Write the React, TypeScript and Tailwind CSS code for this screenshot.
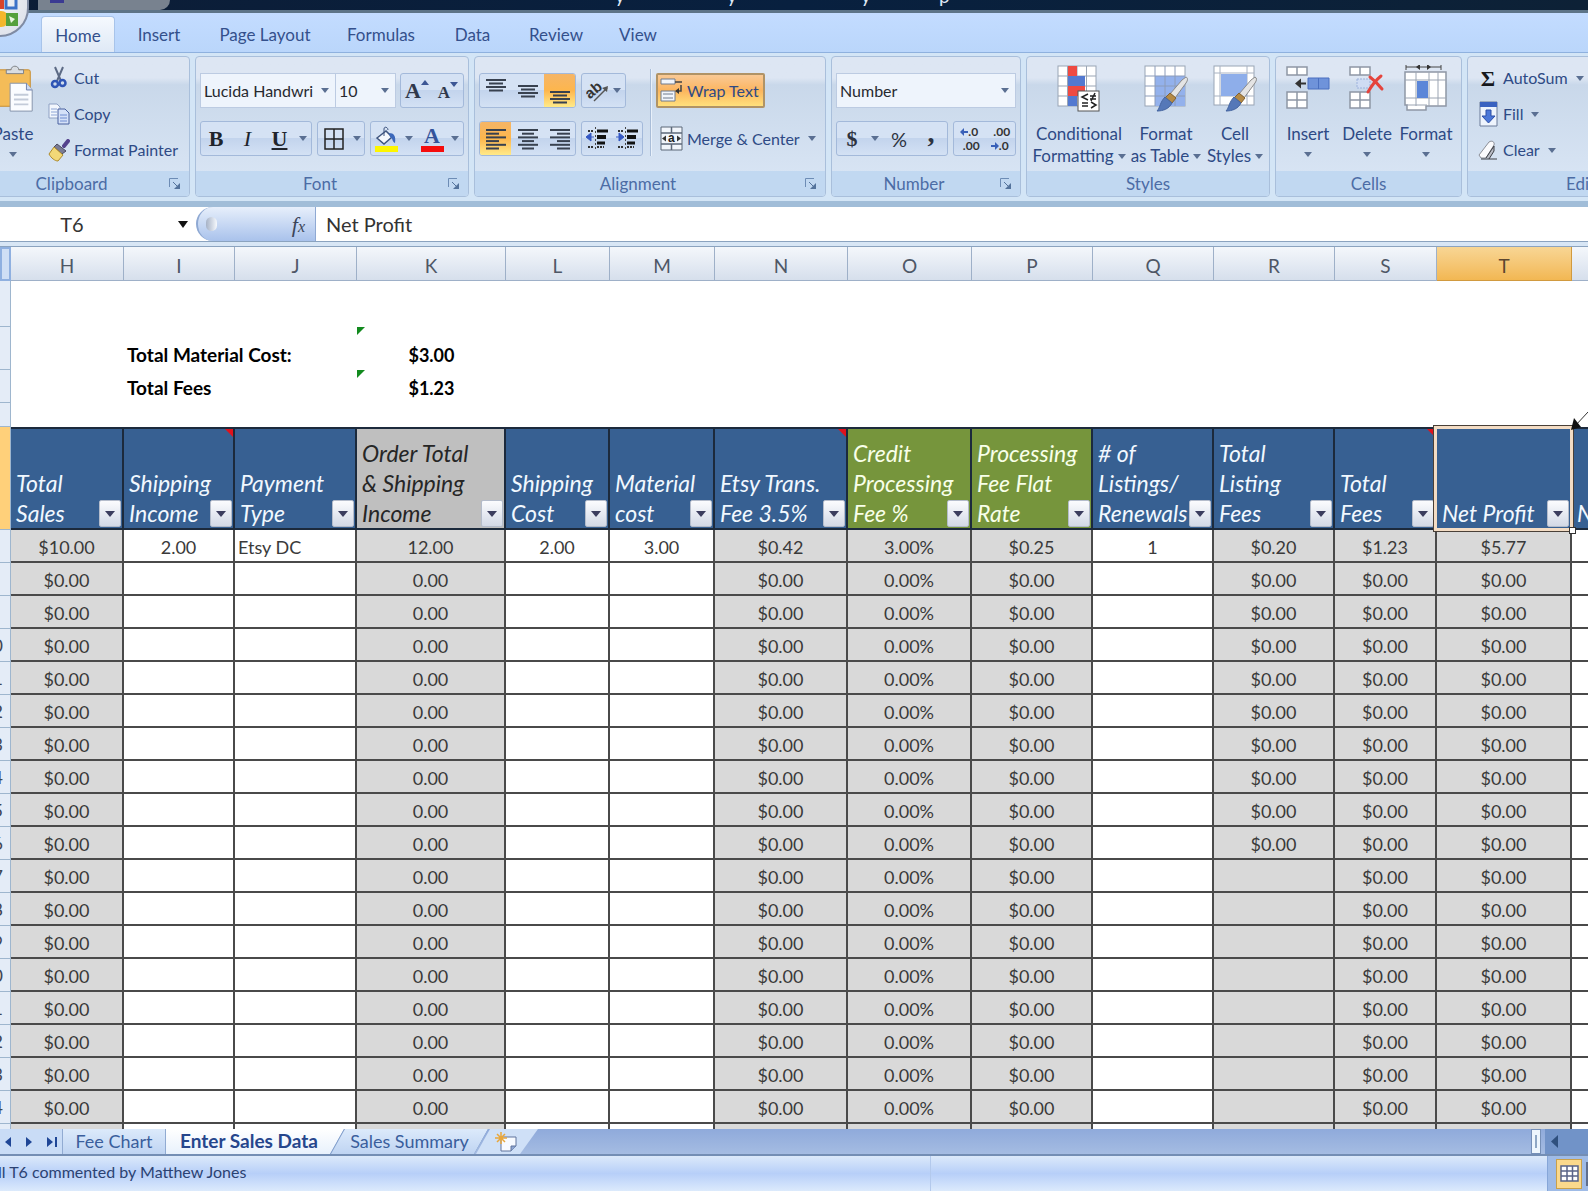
import type { ReactNode } from "react";

type Tone = "blue" | "gray" | "green";

interface Column {
  letter: string;
  width: string;
  header: string[];
  tone: Tone;
  shaded?: boolean;
  comment?: boolean;
  first: string;
  rest: string;
  restRows?: number;
}

const COLUMNS: Column[] = [
  { letter: "H", width: "w-[113px]", header: ["Total", "Sales"], tone: "blue", shaded: true, first: "$10.00", rest: "$0.00" },
  { letter: "I", width: "w-[111px]", header: ["Shipping", "Income"], tone: "blue", comment: true, first: "2.00", rest: "" },
  { letter: "J", width: "w-[122px]", header: ["Payment", "Type"], tone: "blue", first: "Etsy DC", rest: "" },
  { letter: "K", width: "w-[149px]", header: ["Order Total", "& Shipping", "Income"], tone: "gray", shaded: true, first: "12.00", rest: "0.00" },
  { letter: "L", width: "w-[104px]", header: ["Shipping", "Cost"], tone: "blue", first: "2.00", rest: "" },
  { letter: "M", width: "w-[105px]", header: ["Material", "cost"], tone: "blue", first: "3.00", rest: "" },
  { letter: "N", width: "w-[133px]", header: ["Etsy Trans.", "Fee 3.5%"], tone: "blue", shaded: true, comment: true, first: "$0.42", rest: "$0.00" },
  { letter: "O", width: "w-[124px]", header: ["Credit", "Processing", "Fee %"], tone: "green", shaded: true, first: "3.00%", rest: "0.00%" },
  { letter: "P", width: "w-[121px]", header: ["Processing", "Fee Flat", "Rate"], tone: "green", shaded: true, first: "$0.25", rest: "$0.00" },
  { letter: "Q", width: "w-[121px]", header: ["# of", "Listings/", "Renewals"], tone: "blue", first: "1", rest: "" },
  { letter: "R", width: "w-[121px]", header: ["Total", "Listing", "Fees"], tone: "blue", shaded: true, first: "$0.20", rest: "$0.00", restRows: 9 },
  { letter: "S", width: "w-[102px]", header: ["Total", "Fees"], tone: "blue", shaded: true, comment: true, first: "$1.23", rest: "$0.00" },
  { letter: "T", width: "w-[135px]", header: ["Net Profit"], tone: "blue", shaded: true, first: "$5.77", rest: "$0.00" },
];

const TONES: Record<Tone, string> = {
  blue: "bg-[#376092] text-[#f1f8ff]",
  gray: "bg-[#bfbfbf] text-[#262626]",
  green: "bg-[#76953c] text-[#f8ffe9]",
};

const ROWS = Array.from({ length: 19 }, (_, i) => i + 7);

const TABS = [
  { label: "Insert", width: "w-[88px]" },
  { label: "Page Layout", width: "w-[124px]" },
  { label: "Formulas", width: "w-[108px]" },
  { label: "Data", width: "w-[75px]" },
  { label: "Review", width: "w-[92px]" },
  { label: "View", width: "w-[72px]" },
];

function Caret({ className = "text-[#5a6f92]" }: { className?: string }) {
  return (
    <svg width="8" height="5" viewBox="0 0 8 5" className={`shrink-0 ${className}`} aria-hidden="true">
      <path d="M0 0h8L4 5z" fill="currentColor" />
    </svg>
  );
}

function Group({ label, width, launcher, children }: { label: string; width: string; launcher?: boolean; children: ReactNode }) {
  return (
    <section
      className={`flex h-[141px] shrink-0 flex-col overflow-hidden rounded-[4px] border border-[#a9bfdb] bg-linear-to-b from-[#dde6f3] from-15% via-[#c9d8ea] via-20% to-[#dbe7f6] ${width}`}
    >
      <div className="flex-1">{children}</div>
      <div className="flex h-[25px] items-center bg-[#c1d8f1] text-[17px] text-[#4c6ca5]">
        <span className="flex-1 text-center">{label}</span>
        {launcher && (
          <button aria-label={`${label} options`} className="flex w-[24px] justify-center pr-1">
            <svg width="12" height="12" viewBox="0 0 12 12" fill="none" stroke="#6d8cb5">
              <path d="M.5 9V.5H9" />
              <path d="M4 4l5 5" stroke="#54739c" />
              <path d="M11 5v6H5z" fill="#54739c" stroke="none" />
            </svg>
          </button>
        )}
      </div>
    </section>
  );
}

function Box({ className = "", children }: { className?: string; children: ReactNode }) {
  return (
    <div className={`flex h-[35px] shrink-0 overflow-hidden rounded-[3px] border border-[#a3b9da] bg-linear-to-b from-[#d5e2f4] from-50% via-[#c3d4ed] via-50% to-[#d3e1f4] ${className}`}>
      {children}
    </div>
  );
}

function IconButton({ label, className = "", children }: { label: string; className?: string; children: ReactNode }) {
  return (
    <button aria-label={label} className={`flex items-center justify-center ${className}`}>
      {children}
    </button>
  );
}

function Dropdown({ label, value, className = "" }: { label: string; value: string; className?: string }) {
  return (
    <label className={`relative flex h-[35px] border-[#bccbe2] bg-[#eef4fc] ${className}`}>
      <span className="sr-only">{label}</span>
      <select className="w-full appearance-none pl-[3px] text-[16px] text-[#26292f]">
        <option>{value}</option>
      </select>
      <span className="pointer-events-none absolute top-[14px] right-[6px] flex">
        <Caret />
      </span>
    </label>
  );
}

const ALIGN_LINES = {
  left: [[0, 20], [0, 13], [0, 20], [0, 13], [0, 20], [0, 13]],
  center: [[0, 20], [4, 12], [0, 20], [4, 12], [0, 20], [4, 12]],
  right: [[0, 20], [7, 13], [0, 20], [7, 13], [0, 20], [7, 13]],
  short: [[0, 20], [3, 14], [0, 20], [3, 14]],
};

function LinesIcon({ kind }: { kind: keyof typeof ALIGN_LINES }) {
  const lines = ALIGN_LINES[kind];
  const step = kind === "short" ? 3.5 : 3.7;
  return (
    <svg width="20" height={kind === "short" ? 14 : 22} aria-hidden="true">
      {lines.map(([x, w], i) => (
        <rect key={i} x={x} y={i * step + 1} width={w} height="2" fill="#38414f" />
      ))}
    </svg>
  );
}

function IndentIcon({ right }: { right?: boolean }) {
  return (
    <svg width="24" height="26" viewBox="0 0 24 26" aria-hidden="true">
      <path d="M10.5 1v24" stroke="#444" strokeDasharray="2 2" />
      <path d="M3 5h6M3 21h6M12 21h7" stroke="#333" strokeWidth="2" strokeDasharray="2 1" />
      <path d="M12 5h11M12 17h8" stroke="#111" strokeWidth="3" />
      <path d="M12 11h9" stroke="#111" strokeWidth="4" />
      <path d={right ? "M1 11h5M4 7l5 4-5 4z" : "M9 11H4M6 7l-5 4 5 4z"} fill="#3458c4" stroke="#3458c4" />
    </svg>
  );
}

function Brush() {
  return (
    <g>
      <path d="M42 12c2 1 2 3 0 6L31 33l-5-4L38 15z" fill="#e4e4e4" stroke="#8a8a8a" />
      <path d="M26 28l6 5-4 5-7-5z" fill="#b58a45" stroke="#806030" />
      <path d="M21 32l7 6c-3 6-9 8-15 8 3-3 3-9 8-14z" fill="#5578b8" stroke="#4565a0" />
    </g>
  );
}

function ConditionalIcon() {
  return (
    <svg width="44" height="48" viewBox="0 0 44 48" aria-hidden="true">
      <rect x="1" y="1" width="38" height="40" fill="#fff" stroke="#9aa5b5" />
      <path d="M1 11h38M1 21h38M1 31h38M10.5 1v40M20 1v40M29.5 1v40" stroke="#9aa5b5" />
      <path d="M11 1h9v10h-9zM11 21h17v10H11z" fill="#ee4a42" />
      <path d="M11 11h17v10H11zM11 31h9v10h-9z" fill="#5379d0" />
      <rect x="21" y="26" width="21" height="20" fill="#fff" stroke="#555" />
      <path d="M31 29l-6 3 6 3M25 38h6M25 41h6M33 31h6M33 34h6M38 28l-4 8M34 37l5 3-5 3" fill="none" stroke="#222" strokeWidth="1.5" />
    </svg>
  );
}

function FormatTableIcon() {
  return (
    <svg width="44" height="48" viewBox="0 0 44 48" aria-hidden="true">
      <rect x="1" y="1" width="40" height="40" fill="#fff" stroke="#9aa5b5" />
      <path d="M11 11h30v30H11z" fill="#93b1ec" />
      <path d="M1 11h40M1 21h40M1 31h40M11 1v40M21 1v40M31 1v40" stroke="#8c9cba" />
      <Brush />
    </svg>
  );
}

function CellStylesIcon() {
  return (
    <svg width="44" height="48" viewBox="0 0 44 48" aria-hidden="true">
      <rect x="1" y="1" width="40" height="39" fill="#fff" stroke="#9aa5b5" />
      <path d="M1 8h40M1 31h40M7 1v39M34 1v39" stroke="#a8b2c2" />
      <path d="M8 9h26v22H8z" fill="#8eaeea" />
      <Brush />
    </svg>
  );
}

function InsertCellsIcon() {
  return (
    <svg width="44" height="48" viewBox="0 0 44 48" aria-hidden="true">
      <path d="M1 2h20v8H1zM11 2v8M1 27h20v16H1zM11 27v16M1 35h20" fill="#fff" stroke="#8e97a5" strokeWidth="1.5" />
      <path d="M22 13h21v11H22z" fill="#6f93da" stroke="#4a6fbf" />
      <path d="M32.5 13v11" stroke="#4a6fbf" />
      <path d="M20 18.5h-6" stroke="#333" strokeWidth="2" />
      <path d="M9 18.5l6-5v10z" fill="#333" />
    </svg>
  );
}

function DeleteCellsIcon() {
  return (
    <svg width="44" height="48" viewBox="0 0 44 48" aria-hidden="true">
      <path d="M5 2h20v8H5zM15 2v8M5 27h20v16H5zM15 27v16M5 35h20" fill="#fff" stroke="#8e97a5" strokeWidth="1.5" />
      <path d="M12 14h13v9H12z" fill="#cfdcf3" stroke="#9db2dc" strokeDasharray="2 1" />
      <path d="M25 12c4 3 8 7 12 12M36 11c-5 4-9 9-13 16" fill="none" stroke="#e5443c" strokeWidth="3" strokeLinecap="round" />
    </svg>
  );
}

function FormatCellsIcon() {
  return (
    <svg width="44" height="48" viewBox="0 0 44 48" aria-hidden="true">
      <path d="M2 2h35M2 0v5M37 0v5" stroke="#444" />
      <path d="M12 2l4-3v6zM27 2l-4-3v6z" fill="#333" />
      <path d="M1 7h41v34H22v4H3v-5H1z" fill="#fff" stroke="#8e97a5" strokeWidth="1.5" />
      <path d="M1 15h41M1 33h41M12 7v34M25 7v34M34 7v34M3 40h20" stroke="#9ba4b2" />
      <path d="M13 16h11v17H13z" fill="#5b86d8" />
    </svg>
  );
}

function BigButton({ icon, lines, width, caretBelow }: { icon: ReactNode; lines: string[]; width: string; caretBelow?: boolean }) {
  return (
    <button className={`flex shrink-0 flex-col items-center text-[17px] leading-[22px] whitespace-nowrap text-[#2e4a85] ${width}`}>
      {icon}
      <span className="mt-[10px]">{lines[0]}</span>
      {caretBelow ? (
        <span className="flex h-[18px] items-center">
          <Caret />
        </span>
      ) : (
        <span className="flex items-center gap-1">
          {lines[1]}
          <Caret />
        </span>
      )}
    </button>
  );
}

function SmallButton({ icon, label, caret }: { icon: ReactNode; label: string; caret?: boolean }) {
  return (
    <button className="flex h-[36px] items-center gap-1 text-[16px] whitespace-nowrap text-[#2e4a85]">
      <span className="flex w-[22px] justify-center">{icon}</span>
      {label}
      {caret && (
        <span className="pl-1">
          <Caret />
        </span>
      )}
    </button>
  );
}

function ClipboardGroup() {
  return (
    <Group label="Clipboard" width="-ml-[23px] w-[213px]" launcher>
      <div className="flex pt-[3px]">
        <div className="flex w-[70px] shrink-0 justify-center pt-[5px]">
          <BigButton
            width="w-[50px]"
            lines={["Paste"]}
            caretBelow
            icon={
              <svg width="42" height="48" viewBox="0 0 42 50" aria-hidden="true">
                <rect x="1" y="5" width="38" height="38" rx="2" fill="#f4bc58" stroke="#c88b2c" />
                <path d="M14 9V5h5c0-5 8-5 8 0h5v4z" fill="#d9dde2" stroke="#7c7f84" />
                <path d="M18 19h17l6 7v22H18z" fill="#fafcff" stroke="#8492aa" />
                <path d="M35 19v7h6" fill="#cfdaf0" stroke="#6d80ad" />
                <path d="M22 31h15M22 36h15M22 41h15" stroke="#c3cbd9" strokeWidth="2" />
              </svg>
            }
          />
        </div>
        <div>
          <SmallButton
            label="Cut"
            icon={
              <svg width="18" height="24" viewBox="0 0 18 24" aria-hidden="true">
                <path d="M5 1l6 14M13 1L7 15" stroke="#5d6b85" strokeWidth="2" />
                <circle cx="5" cy="18" r="3" fill="none" stroke="#2f55b5" strokeWidth="2.5" />
                <circle cx="12.5" cy="17" r="3" fill="none" stroke="#2f55b5" strokeWidth="2.5" />
              </svg>
            }
          />
          <SmallButton
            label="Copy"
            icon={
              <svg width="22" height="22" viewBox="0 0 22 22" aria-hidden="true">
                <path d="M1 1h8l3 3v11H1z" fill="#f3f7fd" stroke="#8fa1c4" />
                <path d="M3 6h6M3 9h6M3 12h6" stroke="#8da5d6" />
                <path d="M10 6h7l4 4v11H10z" fill="#d5e1f8" stroke="#48619f" />
                <path d="M12 12h7M12 15h7M12 18h7" stroke="#6e8cd0" />
              </svg>
            }
          />
          <SmallButton
            label="Format Painter"
            icon={
              <svg width="22" height="23" viewBox="0 0 22 23" aria-hidden="true">
                <path d="M16 7l4-5" stroke="#54428c" strokeWidth="4" strokeLinecap="round" />
                <path d="M9 5l9 7-4 3-8-7z" fill="#7a7b94" stroke="#4b4b60" />
                <path d="M6 8l9 8-5 6c-3 0-7-3-9-7z" fill="#f2d877" stroke="#ad8a2d" />
              </svg>
            }
          />
        </div>
      </div>
    </Group>
  );
}

function FontGroup() {
  return (
    <Group label="Font" width="w-[274px]" launcher>
      <div className="flex flex-col gap-[13px] px-1 pt-4">
        <div className="flex">
          <Dropdown label="Font name" value="Lucida Handwri" className="w-[136px] border" />
          <Dropdown label="Font size" value="10" className="w-[60px] border-y border-r" />
          <Box className="ml-1 w-[64px] font-['Liberation_Serif'] font-bold text-[#30394b]">
            <IconButton label="Grow font" className="w-[32px] text-[22px]">
              A
              <Caret className="mb-4 rotate-180 text-[#3d5795]" />
            </IconButton>
            <IconButton label="Shrink font" className="w-[30px] pt-1 text-[17px]">
              A
              <Caret className="mb-4 text-[#3d5795]" />
            </IconButton>
          </Box>
        </div>
        <div className="flex gap-[5px]">
          <Box className="w-[112px] font-['Liberation_Serif'] text-[22px] text-[#20242c]">
            <IconButton label="Bold" className="w-[30px] font-bold">B</IconButton>
            <IconButton label="Italic" className="w-[33px] italic">I</IconButton>
            <IconButton label="Underline" className="w-[31px] font-bold underline underline-offset-2">U</IconButton>
            <IconButton label="Underline styles" className="flex-1"><Caret /></IconButton>
          </Box>
          <Box className="w-[48px]">
            <IconButton label="Borders" className="w-[32px]">
              <svg width="20" height="22" viewBox="0 0 20 22" fill="none" stroke="#222" strokeWidth="1.5">
                <path d="M1 1h18v20H1zM10 1v20M1 11h18" />
              </svg>
            </IconButton>
            <IconButton label="Border styles" className="flex-1"><Caret /></IconButton>
          </Box>
          <Box className="w-[94px]">
            <IconButton label="Fill color" className="w-[30px]">
              <svg width="24" height="26" viewBox="0 0 24 26">
                <path d="M3 12l9-7 6 6-8 7z" fill="#f5f8fd" stroke="#3f557f" strokeWidth="1.5" />
                <path d="M10 10V3c0-3 4-2 4 1" fill="none" stroke="#3f557f" />
                <path d="M15 7c5 0 7 3 6 10-3-1-2-5-5-6z" fill="#3c68bb" />
                <path d="M1 20h23v6H1z" fill="#fdf500" />
              </svg>
            </IconButton>
            <IconButton label="Fill color menu" className="w-[16px]"><Caret /></IconButton>
            <IconButton label="Font color" className="w-[30px]">
              <span className="flex h-[26px] w-[23px] items-center justify-center border-b-[6px] border-[#f50d0d] font-['Liberation_Serif'] text-[22px] font-bold text-[#33549b]">
                A
              </span>
            </IconButton>
            <IconButton label="Font color menu" className="flex-1"><Caret /></IconButton>
          </Box>
        </div>
      </div>
    </Group>
  );
}

function AlignmentGroup() {
  const pressed = "bg-linear-to-b from-[#f5b566] via-[#fdb64c] to-[#ffea88]";
  return (
    <Group label="Alignment" width="w-[352px]" launcher>
      <div className="flex gap-1 px-1 pt-4">
        <div className="flex flex-col gap-[13px]">
          <div className="flex gap-[5px]">
            <Box className="w-[97px]">
              <IconButton label="Top align" className="w-[32px] pb-3"><LinesIcon kind="short" /></IconButton>
              <IconButton label="Middle align" className="w-[32px]"><LinesIcon kind="short" /></IconButton>
              <IconButton label="Bottom align" className={`flex-1 pt-3 ${pressed}`}><LinesIcon kind="short" /></IconButton>
            </Box>
            <Box className="w-[45px]">
              <IconButton label="Orientation" className="flex-1 gap-[3px]">
                <svg width="24" height="26" viewBox="0 0 24 26">
                  <text x="0" y="17" transform="rotate(-40 8 14)" fontSize="15" fontWeight="bold" fontFamily="Liberation Sans" fill="#333">ab</text>
                  <path d="M8 23L21 10" stroke="#555" strokeWidth="1.5" />
                  <path d="M22 8l-1 6-5-4z" fill="#555" />
                </svg>
                <Caret />
              </IconButton>
            </Box>
          </div>
          <div className="flex gap-[5px]">
            <Box className="w-[97px]">
              <IconButton label="Align left" className={`w-[31px] ${pressed}`}><LinesIcon kind="left" /></IconButton>
              <IconButton label="Center" className="w-[34px]"><LinesIcon kind="center" /></IconButton>
              <IconButton label="Align right" className="flex-1"><LinesIcon kind="right" /></IconButton>
            </Box>
            <Box className="w-[62px]">
              <IconButton label="Decrease indent" className="flex-1"><IndentIcon /></IconButton>
              <IconButton label="Increase indent" className="flex-1"><IndentIcon right /></IconButton>
            </Box>
          </div>
        </div>
        <div className="-mt-1 ml-[3px] w-[2px] border-l border-[#a9bdd8] bg-[#e8f0fa]" />
        <div className="flex flex-col gap-[13px] text-[16px] whitespace-nowrap text-[#2e4a85]">
          <button className="flex h-[35px] w-[109px] items-center gap-1 rounded-[2px] border-2 border-[#b09366] bg-linear-to-b from-[#f9c995] via-[#fbb55e] to-[#ffe07c] pl-[2px]">
            <svg width="23" height="25" viewBox="0 0 23 25" className="shrink-0" aria-hidden="true">
              <path d="M1 1h14v5H1zM1 13h14v10H1z" fill="#f1f5fb" stroke="#6f7b8d" />
              <path d="M3 16h10M3 20h10" stroke="#6f7b8d" />
              <path d="M15 4h7M21 7v6h-3" fill="none" stroke="#444" strokeWidth="1.5" />
              <path d="M15 13l4-3v6z" fill="#333" />
            </svg>
            Wrap Text
          </button>
          <button className="flex h-[35px] items-center gap-1 pl-1">
            <svg width="23" height="25" viewBox="0 0 23 25" className="shrink-0" aria-hidden="true">
              <path d="M1 1h21v23H1z" fill="#f1f5fb" stroke="#5c6879" />
              <path d="M1 7h21M1 18h21M11.5 1v6M11.5 18v6" stroke="#5c6879" strokeWidth="1.5" />
              <path d="M2 12.5l4-3v6zM21 12.5l-4-3v6z" fill="#333" />
              <text x="8" y="16" fontSize="12" fontWeight="bold" fontFamily="Liberation Sans" fill="#222">a</text>
            </svg>
            Merge &amp; Center
            <span className="pl-1"><Caret /></span>
          </button>
        </div>
      </div>
    </Group>
  );
}

function NumberGroup() {
  return (
    <Group label="Number" width="w-[190px]" launcher>
      <div className="flex flex-col gap-[13px] px-1 pt-4">
        <Dropdown label="Number format" value="Number" className="border" />
        <div className="flex gap-[5px]">
          <Box className="w-[112px] text-[#2d3340]">
            <IconButton label="Accounting format" className="w-[30px] font-['Liberation_Serif'] text-[22px] font-bold">$</IconButton>
            <IconButton label="Accounting menu" className="w-[16px]"><Caret /></IconButton>
            <IconButton label="Percent style" className="w-[32px] text-[20px]">%</IconButton>
            <IconButton label="Comma style" className="flex-1 pb-3 font-['Liberation_Serif'] text-[28px] font-bold">,</IconButton>
          </Box>
          <Box className="w-[63px] text-[12px] leading-[14px] font-bold text-[#333]">
            <IconButton label="Increase decimal" className="flex-1 flex-col">
              <span className="flex items-center">
                <svg width="8" height="8" viewBox="0 0 8 8"><path d="M0 4l4-4v3h4v2H4v3z" fill="#3960b8" /></svg>
                .0
              </span>
              <span className="pl-1">.00</span>
            </IconButton>
            <IconButton label="Decrease decimal" className="flex-1 flex-col">
              <span className="pl-1">.00</span>
              <span className="flex items-center">
                <svg width="8" height="8" viewBox="0 0 8 8"><path d="M8 4L4 0v3H0v2h4v3z" fill="#3960b8" /></svg>
                .0
              </span>
            </IconButton>
          </Box>
        </div>
      </div>
    </Group>
  );
}

function Ribbon() {
  return (
    <div className="flex h-[155px] shrink-0 gap-[5px] overflow-hidden border-t border-b-[6px] border-t-[#8fb1de] border-b-[#a1bdd8] bg-[#d3e5f6] pt-[3px]">
      <ClipboardGroup />
      <FontGroup />
      <AlignmentGroup />
      <NumberGroup />
      <Group label="Styles" width="w-[244px]">
        <div className="flex pt-2 pl-[3px]">
          <BigButton width="w-[98px]" lines={["Conditional", "Formatting"]} icon={<ConditionalIcon />} />
          <BigButton width="w-[76px]" lines={["Format", "as Table"]} icon={<FormatTableIcon />} />
          <BigButton width="w-[62px]" lines={["Cell", "Styles"]} icon={<CellStylesIcon />} />
        </div>
      </Group>
      <Group label="Cells" width="w-[187px]">
        <div className="flex pt-2 pl-[3px]">
          <BigButton width="w-[58px]" lines={["Insert"]} caretBelow icon={<InsertCellsIcon />} />
          <BigButton width="w-[60px]" lines={["Delete"]} caretBelow icon={<DeleteCellsIcon />} />
          <BigButton width="w-[58px]" lines={["Format"]} caretBelow icon={<FormatCellsIcon />} />
        </div>
      </Group>
      <Group label="Editing" width="w-[250px]">
        <div className="pt-[3px] pl-[9px]">
          <SmallButton
            label="AutoSum"
            caret
            icon={<span className="font-['Liberation_Serif'] text-[22px] font-bold text-[#16181c]">Σ</span>}
          />
          <SmallButton
            label="Fill"
            caret
            icon={
              <svg width="19" height="26" viewBox="0 0 19 26" aria-hidden="true">
                <path d="M1 1h17v24H1z" fill="#eef4fd" stroke="#6b7a99" />
                <path d="M1 1h17v5H1z" fill="#3a62c0" />
                <path d="M7 9h5v6h4l-6.5 7L3 15h4z" fill="#4b77d8" stroke="#2d4ea6" />
              </svg>
            }
          />
          <SmallButton
            label="Clear"
            caret
            icon={
              <svg width="21" height="20" viewBox="0 0 21 20" aria-hidden="true">
                <path d="M1 15L11 2c3-2 6 0 5 3L8 18H3z" fill="#fbfbfd" stroke="#8b8e96" />
                <path d="M3 19h16M8 18l8-12v5l-5 8" fill="#b9bcc5" stroke="#3c3f45" />
              </svg>
            }
          />
        </div>
      </Group>
    </div>
  );
}

function FormulaBar() {
  return (
    <div className="flex h-[34px] shrink-0 bg-white text-[20px] text-[#333]">
      <label className="flex w-[196px] items-center">
        <span className="sr-only">Name box</span>
        <input className="w-[144px] text-center outline-none" defaultValue="T6" />
        <span className="ml-auto pr-2">
          <svg width="10" height="7" viewBox="0 0 10 7" aria-hidden="true"><path d="M0 0h10L5 7z" fill="#111" /></svg>
        </span>
      </label>
      <div className="flex w-[120px] items-center justify-between rounded-l-full border-r border-l-2 border-[#8fa9d3] bg-linear-to-b from-[#e7effb] to-[#a9c2eb] pr-[10px] pl-2">
        <span className="h-[14px] w-[11px] rounded-full bg-linear-to-r from-[#a6b2c6] to-[#f6f9fd]" />
        <button className="font-['Liberation_Serif'] text-[22px] text-[#3b4558] italic" aria-label="Insert function">
          f<span className="text-[16px]">x</span>
        </button>
      </div>
      <label className="flex flex-1">
        <span className="sr-only">Formula</span>
        <input className="w-full pl-[10px] outline-none" defaultValue="Net Profit" />
      </label>
    </div>
  );
}

function HeaderCell({ col }: { col: Column }) {
  return (
    <td className={`relative border-t-2 border-r-2 border-b-2 border-[#1c2a3c] p-0 pl-[5px] align-bottom text-[23px] leading-[30px] whitespace-nowrap italic ${TONES[col.tone]}`}>
      {col.header.map((line) => (
        <div key={line}>{line}</div>
      ))}
      <button
        aria-label={`Filter ${col.header.join(" ")}`}
        className="absolute right-[1px] bottom-[1px] flex h-[27px] w-[22px] items-center justify-center rounded-[2px] border border-[#b4bccb] bg-linear-to-b from-[#fbfcfe] to-[#d3d9e6]"
      >
        <svg width="10" height="6" viewBox="0 0 10 6" aria-hidden="true"><path d="M0 0h10L5 6z" fill="#3b3d5e" /></svg>
      </button>
      {col.comment && <span className="absolute top-0 right-0 h-[8px] w-[8px] bg-[#e0121c] [clip-path:polygon(0_0,100%_0,100%_100%)]" />}
      {col.letter === "T" && (
        <span className="pointer-events-none absolute -inset-[3px] border-[3px] border-[#f3dcc4] outline outline-[#4a4038]">
          <span className="absolute -right-[6px] -bottom-[6px] h-[7px] w-[7px] border border-[#333] bg-white" />
        </span>
      )}
    </td>
  );
}

function ErrorMark() {
  return <span className="absolute top-0 left-0 h-[8px] w-[8px] bg-[#128a1e] [clip-path:polygon(0_0,100%_0,0_100%)]" />;
}

function RowHead({ n, active }: { n: number; active?: boolean }) {
  return (
    <th
      scope="row"
      className={`overflow-hidden border-r border-b border-[#9eb6ce] p-0 font-normal ${active ? "bg-[#ffd07a]" : "bg-[#e4ecf7]"}`}
    >
      {n > 9 && <div className="flex w-[3px] justify-end overflow-hidden text-[18px] text-[#3f4654]">{n}</div>}
    </th>
  );
}

function SummaryRow({ n, height, label, value }: { n: number; height: string; label?: string; value?: string }) {
  return (
    <tr className={height}>
      <RowHead n={n} />
      <td />
      <td colSpan={2} className="p-0 pl-[3px] align-bottom text-[19px] leading-[30px] font-bold whitespace-nowrap text-black">{label}</td>
      <td className="relative p-0 text-center align-bottom text-[18px] leading-[30px] font-bold text-black">
        {value && <ErrorMark />}
        {value}
      </td>
      <td colSpan={10} />
    </tr>
  );
}

function Sheet() {
  return (
    <div className="relative min-h-0 flex-1 overflow-hidden bg-white">
      <table className="w-full table-fixed border-separate border-spacing-0">
        <colgroup>
          <col className="w-[11px]" />
          {COLUMNS.map((c) => (
            <col key={c.letter} className={c.width} />
          ))}
          <col />
        </colgroup>
        <thead>
          <tr className="h-[34px]">
            <th className="border-2 border-[#8fb0e0] bg-[#cfdff5] p-0" />
            {COLUMNS.map((c) => (
              <th
                key={c.letter}
                scope="col"
                className={`border-r border-b p-0 pt-[4px] text-[19px] leading-[28px] font-normal ${
                  c.letter === "T"
                    ? "border-[#d19a3f] bg-linear-to-b from-[#f8d694] to-[#f2b752] text-[#5c4630]"
                    : "border-[#9eb0c8] bg-linear-to-b from-[#f4f7fb] to-[#d6dfec] text-[#4e5766]"
                }`}
              >
                {c.letter}
              </th>
            ))}
            <th className="border-b border-[#9eb0c8] bg-linear-to-b from-[#f4f7fb] to-[#d6dfec] p-0" />
          </tr>
        </thead>
        <tbody>
          <SummaryRow n={2} height="h-[46px]" />
          <SummaryRow n={3} height="h-[43px]" label="Total Material Cost:" value="$3.00" />
          <SummaryRow n={4} height="h-[33px]" label="Total Fees" value="$1.23" />
          <SummaryRow n={5} height="h-[24px]" />
          <tr className="h-[103px]">
            <RowHead n={6} active />
            {COLUMNS.map((c) => (
              <HeaderCell key={c.letter} col={c} />
            ))}
            <td className="overflow-hidden border-y-2 border-[#1c2a3c] bg-[#376092] p-0 pl-[5px] align-bottom text-[23px] leading-[30px] text-[#f1f8ff] italic">
              N
            </td>
          </tr>
          {ROWS.map((n, i) => (
            <tr key={n} className="h-[33px]">
              <RowHead n={n} />
              {COLUMNS.map((c) => {
                const shown = i === 0 ? c.first : i <= (c.restRows ?? 99) ? c.rest : "";
                return (
                  <td
                    key={c.letter}
                    className={`border-r-2 border-b-2 border-[#4a4a4a] p-0 pt-[4px] text-[18px] leading-[27px] text-[#3a3a3a] ${c.shaded ? "bg-[#d9d9d9]" : "bg-white"} ${
                      c.letter === "J" ? "pl-[3px] text-left" : "text-center"
                    }`}
                  >
                    {shown}
                  </td>
                );
              })}
              <td className="border-b-2 border-[#4a4a4a] bg-white p-0" />
            </tr>
          ))}
        </tbody>
      </table>
      {/* comment connector pointing at T6 */}
      <svg className="absolute top-[164px] right-0" width="18" height="22" viewBox="0 0 18 22" aria-hidden="true">
        <path d="M18 1L5 15" stroke="#333" />
        <path d="M1 19l3-12 7 9z" fill="#111" />
      </svg>
    </div>
  );
}

function SheetTabs() {
  const tab = "flex h-full items-center justify-center whitespace-nowrap";
  return (
    <nav className="flex h-[27px] shrink-0 border-b-2 border-[#748eb4] bg-linear-to-b from-[#8faadb] to-[#a5bce2] text-[18px]">
      <div className="flex w-[62px] items-center justify-around bg-[#c9dcf6] text-[#1f4696]">
        {["M6 0v10L0 5z", "M0 0v10l6-5z", "M0 0v10l6-5zM8 0h2v10H8z"].map((d, i) => (
          <button key={d} aria-label={["Previous sheet", "Next sheet", "Last sheet"][i]}>
            <svg width="10" height="10" viewBox="0 0 10 10"><path d={d} fill="currentColor" /></svg>
          </button>
        ))}
      </div>
      <button className={`${tab} w-[104px] border-x border-[#91abd2] bg-linear-to-b from-[#dceafb] to-[#bfd4f2] text-[#3a5e9c]`}>Fee Chart</button>
      <button className={`${tab} w-[178px] bg-linear-to-b from-white to-[#e8f1fc] pr-[12px] text-[19px] font-bold text-[#26468c] [clip-path:polygon(0_0,100%_0,calc(100%-14px)_100%,0_100%)]`}>
        Enter Sales Data
      </button>
      <div className="-ml-[14px] h-full w-[158px] bg-[#7f9cc9] pl-[1px] [clip-path:polygon(14px_0,100%_0,calc(100%-14px)_100%,0_100%)]">
        <button className={`${tab} w-full bg-linear-to-b from-[#dceafb] to-[#bfd4f2] text-[#3a5e9c] [clip-path:polygon(14px_0,100%_0,calc(100%-14px)_100%,0_100%)]`}>
          Sales Summary
        </button>
      </div>
      <button
        aria-label="Insert worksheet"
        className={`${tab} -ml-[12px] w-[62px] bg-[#cfe0f7] [clip-path:polygon(14px_0,100%_0,calc(100%-18px)_100%,0_100%)]`}
      >
        <svg width="24" height="20" viewBox="0 0 24 20" aria-hidden="true">
          <path d="M6 5h15v9l-5 5H6z" fill="#f7faff" stroke="#61759d" />
          <path d="M21 14h-5v5" fill="#8fa7d3" stroke="#61759d" />
          <path d="M6 0v12M0 6h12M2 2l8 8M10 2l-8 8" stroke="#e9a63a" strokeWidth="1.5" />
        </svg>
      </button>
      <span className="ml-auto flex w-[10px] items-center justify-center border border-[#7690b8] bg-[#eef6fd]">
        <span className="h-[13px] w-[2px] bg-[#8fa7c4]" />
      </span>
      <button aria-label="Scroll left" className="ml-1 flex w-[43px] items-center bg-[#7193c8] pl-[6px]">
        <svg width="7" height="13" viewBox="0 0 7 13"><path d="M7 0v13L0 6.5z" fill="#2f507e" /></svg>
      </button>
    </nav>
  );
}

export default function App() {
  return (
    <div className="flex h-screen flex-col overflow-hidden bg-[#bfdbff] font-['Lato',sans-serif]">
      <header className="relative flex h-[13px] shrink-0 overflow-hidden border-b-[3px] border-[#5d7487] bg-linear-to-r from-[#0c1d36] via-[#08203f] to-[#0d2136] pl-[38px]">
        <div className="flex w-[132px] justify-start rounded-br-[14px] bg-[#78828f] pl-3">
          <span className="h-[3px] w-[14px] bg-[#3b3a92]" />
        </div>
        <div className="-mt-[15px] flex pl-[445px] text-[19px] leading-[22px] text-[#dfe8f5]">
          <span className="w-[112px]">y</span>
          <span className="w-[134px]">y</span>
          <span className="w-[78px]">y</span>
          <span>p</span>
        </div>
      </header>
      <nav className="relative flex h-[39px] shrink-0 items-end bg-linear-to-b from-[#c3dcff] to-[#bad6fb] pl-[41px] text-[17px] text-[#34508c]">
        <button aria-label="Office" className="absolute -top-[46px] -left-[29px] h-[70px] w-[58px] overflow-hidden rounded-full border-2 border-[#7f8ba3] bg-radial from-[#f4f4f6] to-[#d8dde8]">
          <svg width="54" height="66" viewBox="0 0 54 66" aria-hidden="true">
            <rect x="22" y="24" width="9" height="16" fill="#d9442c" />
            <rect x="33" y="29" width="10" height="10" fill="none" stroke="#3b71c8" strokeWidth="3" />
            <circle cx="28" cy="50" r="8" fill="#f4b72c" />
            <rect x="33" y="44" width="12" height="13" fill="#56a03c" />
            <path d="M36 47l6 3-4 4z" fill="#eaf6df" />
          </svg>
        </button>
        <button className="h-[36px] w-[74px] rounded-t-[4px] border border-b-0 border-[#a8c4ea] bg-linear-to-b from-[#f5f9fe] to-[#dfe9f6] pt-[2px]">Home</button>
        {TABS.map((t) => (
          <button key={t.label} className={`h-[36px] pt-[2px] ${t.width}`}>{t.label}</button>
        ))}
      </nav>
      <Ribbon />
      <FormulaBar />
      <div className="h-[6px] shrink-0 border-y border-[#8ba3bf] bg-[#d8e6f5]" />
      <Sheet />
      <SheetTabs />
      <footer className="flex h-[35px] shrink-0 bg-linear-to-b from-[#dce9fa] via-[#b7cff8] to-[#dceafc] text-[16px] text-[#2b4272]">
        <div className="-ml-[21px] flex w-[952px] items-center border-r border-[#b3c9ec] pb-[3px]">Cell T6 commented by Matthew Jones</div>
        <div className="ml-auto flex w-[41px] items-center border-l border-[#86a6d8] bg-[#9fbbe6] pl-2">
          <button aria-label="Normal view" className="flex h-[30px] w-[26px] shrink-0 items-center justify-center border border-[#c9a04a] bg-[#fbd98c]">
            <svg width="19" height="17" viewBox="0 0 19 17" fill="#fff" stroke="#5a6488" strokeWidth="1.5">
              <path d="M1 1h17v15H1zM1 6h17M1 11h17M7 1v15M12.5 1v15" />
            </svg>
          </button>
          <span className="ml-1 h-[24px] w-[8px] bg-[#5f6e8d]" />
        </div>
      </footer>
    </div>
  );
}
